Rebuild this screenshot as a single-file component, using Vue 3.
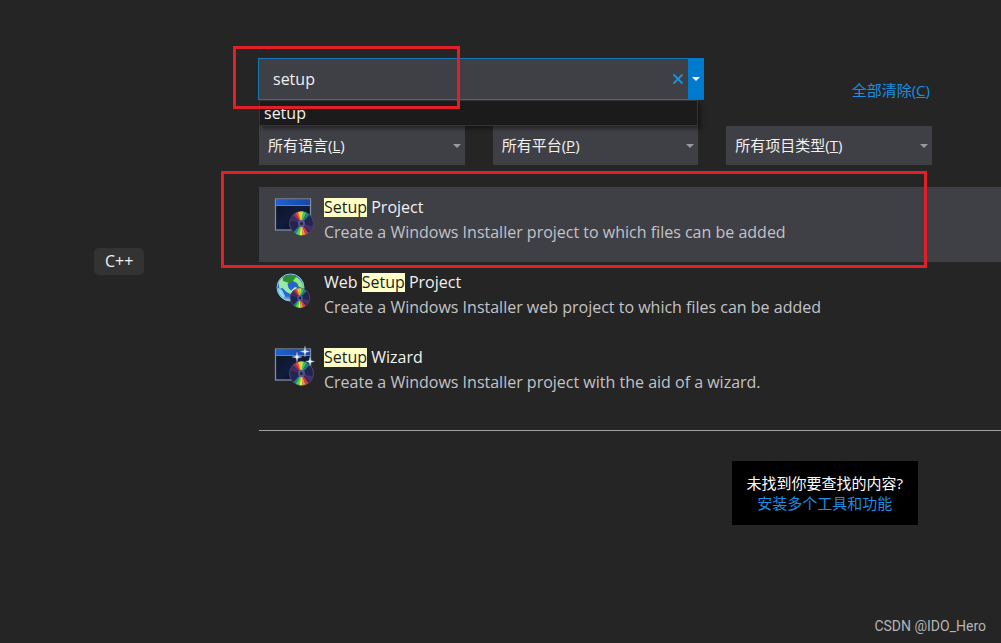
<template>
  <div class="dialog">
    <aside class="recent">
      <span class="tag">C++</span>
    </aside>

    <main class="content">
      <!-- 搜索栏 -->
      <div class="head">
        <div class="search">
          <input v-model="keyword" class="search-input" type="text" aria-label="搜索模板" />
          <button class="search-clear" title="清除" @click="keyword = ''">
            <svg width="12" height="12" viewBox="0 0 12 12">
              <path d="M1.5 1.5 10.5 10.5M10.5 1.5 1.5 10.5" stroke="#1c8fe0" stroke-width="1.8" />
            </svg>
          </button>
          <button class="search-toggle" title="搜索记录">
            <svg width="8" height="4" viewBox="0 0 8 4"><path d="M0 0h8L4 4z" fill="#fff" /></svg>
          </button>
          <div class="history">
            <button class="history-item" @click="keyword = 'setup'">setup</button>
          </div>
          <div class="mark mark-search"></div>
        </div>
        <a class="clear-all" href="#">全部清除(<u>C</u>)</a>
      </div>

      <!-- 筛选条件 -->
      <div class="filters">
        <div v-for="f in filters" :key="f.id" class="filter">
          <select :id="f.id" v-model="f.value" class="filter-select">
            <option value=""></option>
            <option v-for="o in f.options" :key="o" :value="o">{{ o }}</option>
          </select>
          <label v-show="!f.value" :for="f.id" class="filter-label">{{ f.label }}(<u>{{ f.accessKey }}</u>)</label>
          <svg class="filter-arrow" width="8" height="4" viewBox="0 0 8 4"><path d="M0 0h8L4 4z" fill="#999a9f" /></svg>
        </div>
      </div>

      <!-- 模板列表 -->
      <ul class="results">
        <li
          v-for="(t, i) in templates"
          :key="t.icon"
          :class="['result', { active: selected === i }]"
          @click="selected = i"
        >
          <svg class="result-icon" width="42" height="42" viewBox="0 0 42 42">
            <defs>
              <linearGradient :id="'bar-' + i" x1="0" x2="1">
                <stop offset="0" stop-color="#1f62cc" />
                <stop offset="1" stop-color="#1646a8" />
              </linearGradient>
              <linearGradient :id="'pane-' + i" x1="0" y1="0" x2="1" y2="1">
                <stop offset="0" stop-color="#0b1422" />
                <stop offset="0.5" stop-color="#101c3c" />
                <stop offset="1" stop-color="#070c18" />
              </linearGradient>
              <radialGradient :id="'globe-' + i" cx="0.45" cy="0.4" r="0.6">
                <stop offset="0" stop-color="#2463cf" />
                <stop offset="0.7" stop-color="#2a68cc" />
                <stop offset="1" stop-color="#a9dcf0" />
              </radialGradient>
            </defs>
            <g v-if="t.icon === 'web'">
              <circle cx="16.5" cy="17.500" r="13.500" :fill="'url(#globe-' + i + ')'" stroke="#8fc6dc" stroke-width="1" />
              <path d="M4.500 13c2-5 6-7 10-7l3 4-4 4 1 4 5 5-1 2-6-3-4-4-3 1z" fill="#9be9a8" />
              <path d="M9 8c4-4 10-4 14-1l-2 4-6 2-6-2z" fill="#2f8f2b" />
              <path d="M22 7c4 2 7 6 7 11l-4-1-2-4-4-2z" fill="#8feb78" />
              <path d="M4 18l4 2 3 6-1 2c-4-2-6-6-6-10z" fill="#8ad9f0" />
              <path d="M17 21l4-4 5 2 1 4-6 5-4-2z" fill="#d2f4ee" />
            </g>
            <g v-else>
              <rect x="1.500" y="4" width="35" height="31" :fill="'url(#pane-' + i + ')'" stroke="#7f8ca3" stroke-width="1.300" />
              <rect x="2" y="4.500" width="34" height="6" :fill="'url(#bar-' + i + ')'" />
              <path d="M2 10.500h34" stroke="#4a86d8" stroke-width="1" />
            </g>
            <g :transform="t.icon === 'web' ? 'translate(26 28) scale(0.82) translate(-27 -28)' : 'translate(0.500 0.500)'">
              <circle cx="27" cy="28" r="12" fill="#24244f" stroke="#4c4872" stroke-width="1" />
              <path d="M27 28 15.500 25a12 12 0 0 1 3-5.500z" fill="#3a2d68" />
              <path d="M27 28 18.500 19.500l3-2z" fill="#9a2f4e" />
              <path d="M27 28 21 17.500l3-1z" fill="#e8503a" />
              <path d="M27 28 23.500 16.600l3-.5z" fill="#f6c23c" />
              <path d="M27 28 26 16.100h3z" fill="#b9ea4b" />
              <path d="M27 28 28.500 16.200l3.500 1.100z" fill="#3fcb55" />
              <path d="M27 28 32 17.200l3 2.300z" fill="#1f7f86" />
              <path d="M27 28 19 36.500l3 2.200z" fill="#23808a" />
              <path d="M27 28 21.500 38.500l4 1.300z" fill="#4fd23f" />
              <path d="M27 28 25 39.800h3z" fill="#e6ef4a" />
              <path d="M27 28 28 39.800l3-.7z" fill="#f79b36" />
              <path d="M27 28 31 39.200l3-1.700z" fill="#d63c42" />
              <path d="M27 28 38.500 31a12 12 0 0 1-3 5.500z" fill="#43306c" />
              <circle cx="27" cy="28" r="3.500" fill="#57518c" />
              <circle cx="27" cy="28" r="1.500" fill="#22233f" />
            </g>
            <g v-if="t.icon === 'wizard'" fill="#edf2fa" stroke="#8195b5" stroke-width="0.400">
              <path d="M31 1l1 4.500 4 1-4 1-1 4.500-1-4.500-4-1 4-1z" />
              <path d="M23 7l1 4 4 1-4 1-1 4-1-4-4-1 4-1z" />
              <path d="M36 12l1 3.500 3.500 1-3.500 1-1 3.500-1-3.500-3.500-1 3.500-1z" />
            </g>
          </svg>
          <div class="result-text">
            <div class="result-title">{{ t.before }}<mark class="hit">Setup</mark>{{ t.after }}</div>
            <div class="result-desc">{{ t.desc }}</div>
          </div>
          <div v-if="i === 0" class="mark mark-result"></div>
        </li>
      </ul>

      <div class="more">
        <div>未找到你要查找的内容?</div>
        <a href="#">安装多个工具和功能</a>
      </div>
    </main>

    <div class="watermark">CSDN @IDO_Hero</div>
  </div>
</template>

<script setup>
import { ref, reactive } from 'vue'

const keyword = ref('setup')
const selected = ref(0)

const filters = reactive([
  { id: 'language', label: '所有语言', accessKey: 'L', value: '', options: ['C++', 'C#', 'Python'] },
  { id: 'platform', label: '所有平台', accessKey: 'P', value: '', options: ['Windows', 'Linux', 'Android'] },
  { id: 'type', label: '所有项目类型', accessKey: 'T', value: '', options: ['安装', '桌面', '控制台'] }
])

const templates = [
  {
    icon: 'setup',
    before: '',
    after: ' Project',
    desc: 'Create a Windows Installer project to which files can be added'
  },
  {
    icon: 'web',
    before: 'Web ',
    after: ' Project',
    desc: 'Create a Windows Installer web project to which files can be added'
  },
  {
    icon: 'wizard',
    before: '',
    after: ' Wizard',
    desc: 'Create a Windows Installer project with the aid of a wizard.'
  }
]
</script>

<style>
body {
  margin: 0;
  background: #252526;
}
</style>

<style scoped>
.dialog {
  position: relative;
  display: flex;
  min-height: 100vh;
  background: #252526;
  color: #f1f1f1;
  font-family: "Open Sans", "Noto Sans CJK SC", sans-serif;
  font-size: 15px;
}

.dialog * {
  box-sizing: border-box;
}

button,
input,
select {
  margin: 0;
  padding: 0;
  border: none;
  border-radius: 0;
  background: transparent;
  color: inherit;
  font: inherit;
}

a {
  color: #1c8fe0;
  text-decoration: none;
}

.recent {
  flex: none;
  width: 258px;
  padding: 248px 0 0 94px;
  box-sizing: border-box;
}

.tag {
  display: inline-block;
  padding: 0 11px;
  border-radius: 5px;
  background: #333334;
  font-size: 16px;
  line-height: 27px;
}

.content {
  flex: 1;
  display: flex;
  flex-direction: column;
  min-width: 0;
  padding-top: 58px;
}

.head {
  display: flex;
  justify-content: space-between;
  margin-right: 71px;
}

.search {
  position: relative;
  display: flex;
  width: 446px;
  height: 42px;
  border: 1px solid #1778b8;
  background: #3f3f46;
}

.search-input {
  flex: 1;
  min-width: 0;
  padding-left: 14px;
  font-size: 16px;
  outline: none;
}

.search-clear {
  display: flex;
  align-items: center;
  justify-content: center;
  width: 22px;
}

.search-toggle {
  display: flex;
  align-items: center;
  justify-content: center;
  width: 16px;
  margin: -1px;
  background: #007acc;
}

.history {
  position: absolute;
  z-index: 1;
  top: 41px;
  left: 0;
  right: 5px;
  border: 1px solid #333337;
  background: #1b1b1c;
  box-shadow: 3px 3px 4px rgba(0, 0, 0, 0.4);
}

.history-item {
  display: block;
  width: 100%;
  padding-left: 4px;
  font-size: 16px;
  line-height: 24px;
  text-align: left;
}

.mark {
  position: absolute;
  z-index: 2;
  border: 3px solid #e01f28;
  pointer-events: none;
}

.mark-search {
  top: -13px;
  left: -26px;
  width: 227px;
  height: 63px;
}

.mark-result {
  top: -16px;
  right: 74px;
  bottom: -6px;
  left: -38px;
}

.clear-all {
  align-self: flex-end;
  line-height: 20px;
}

.filters {
  display: flex;
  gap: 28px;
  margin: 26px 69px 22px 1px;
}

.filter {
  flex: 1;
  display: grid;
  align-items: center;
  height: 39px;
  background: #3f3f46;
}

.filter > * {
  grid-area: 1 / 1;
}

.filter-select {
  width: 100%;
  height: 100%;
  padding-left: 9px;
  appearance: none;
}

.filter-select option {
  background: #1b1b1c;
}

.filter-label {
  padding: 0 0 2px 9px;
  pointer-events: none;
}

.filter-arrow {
  justify-self: end;
  margin-right: 4px;
  pointer-events: none;
}

.results {
  margin: 0 0 0 1px;
  padding: 0 0 18px;
  border-bottom: 1px solid #a0a0a0;
  list-style: none;
}

.result {
  position: relative;
  display: flex;
  gap: 8px;
  height: 75px;
  padding: 8px 0 0 15px;
}

.result.active {
  background: #3f3f46;
}

.result-text {
  font-size: 16px;
  line-height: 25px;
}

.hit {
  display: inline-block;
  background: #ffffc8;
  color: #1e1e1e;
  line-height: 19px;
}

.result-desc {
  color: #c3c3c6;
}

.more {
  align-self: flex-end;
  margin: 30px 83px 0 0;
  padding: 12px 15px;
  background: #000;
  color: #fff;
  line-height: 20px;
  text-align: center;
}

.watermark {
  position: absolute;
  right: 15px;
  bottom: 8px;
  color: #b4b4b4;
  font-family: Roboto, sans-serif;
  font-size: 14px;
  line-height: 18px;
}
</style>
